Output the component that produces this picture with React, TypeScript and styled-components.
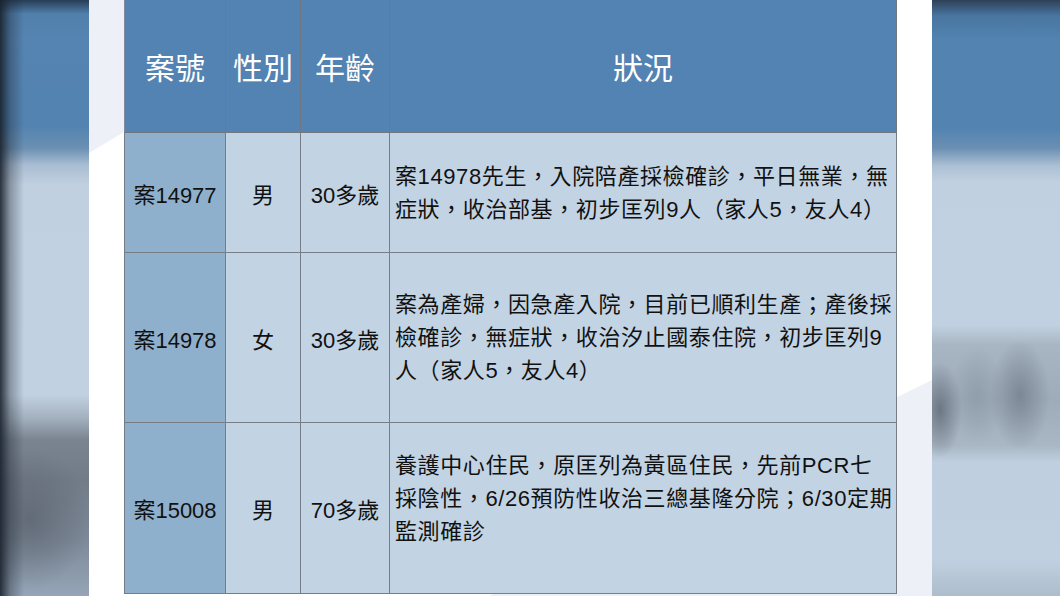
import React from "react";
import styled, { createGlobalStyle } from "styled-components";

const Global = createGlobalStyle`
  html, body { margin: 0; padding: 0; background: #ffffff; }
  body { width: 1060px; height: 596px; overflow: hidden; }
`;

const Stage = styled.div`
  display: flex;
  width: 1060px;
  height: 596px;
  overflow: hidden;
  font-family: "Liberation Sans", "Noto Sans CJK TC", sans-serif;
`;

const LeftBlur = styled.div`
  width: 89px;
  flex: none;
  background:
    linear-gradient(to right, rgba(25, 33, 44, 0.9) 0px, rgba(25, 33, 44, 0.35) 10px, rgba(25, 33, 44, 0) 24px),
    linear-gradient(to bottom, rgba(22, 34, 50, 0.7) 0px, rgba(22, 34, 50, 0) 14px),
    radial-gradient(ellipse 60px 70px at 30px 520px, rgba(80, 86, 96, 0.55), rgba(80, 86, 96, 0)),
    linear-gradient(
      to bottom,
      #4f7ea9 0px,
      #5584b2 40px,
      #5383b0 125px,
      #6a8fb2 148px,
      #a9bdd2 165px,
      #c0d0e0 185px,
      #c1d1e1 395px,
      #a3b0be 418px,
      #7a8490 440px,
      #727c88 480px,
      #7d8999 540px,
      #95a5b7 596px
    );
`;

const RightBlur = styled.div`
  width: 128px;
  flex: none;
  background:
    radial-gradient(ellipse 22px 48px at 8px 410px, rgba(100, 110, 122, 0.85), rgba(100, 110, 122, 0)),
    radial-gradient(ellipse 30px 55px at 88px 395px, rgba(115, 127, 142, 0.8), rgba(115, 127, 142, 0)),
    radial-gradient(ellipse 26px 50px at 45px 395px, rgba(135, 148, 162, 0.6), rgba(135, 148, 162, 0)),
    linear-gradient(
      to bottom,
      #2e4157 0px,
      #4876a0 16px,
      #5383b1 40px,
      #5383b1 128px,
      #6a8fb3 148px,
      #adc0d4 166px,
      #c0d0e0 182px,
      #c1d1e1 325px,
      #a8b5c3 345px,
      #9eabb9 400px,
      #a9b6c4 445px,
      #bfcfdf 462px,
      #c0d0e0 560px,
      #aebccb 596px
    );
`;

const Panel = styled.div`
  position: relative;
  flex: none;
  width: 843px;
  background: #ffffff;
  padding: 0 35px;
  box-sizing: border-box;

  &::before {
    content: "";
    position: absolute;
    inset: 0;
    background: #edf0f6;
    clip-path: polygon(0 0, 255px 0, 0 153px);
  }

  &::after {
    content: "";
    position: absolute;
    inset: 0;
    background: #edf0f6;
    clip-path: polygon(843px 380px, 843px 596px, 400px 596px);
  }
`;

const Table = styled.table`
  position: relative;
  z-index: 1;
  width: 773px;
  border-collapse: collapse;
  table-layout: fixed;
`;

const HeadCell = styled.th<{ $w?: number }>`
  ${(p) => (p.$w ? `width: ${p.$w}px;` : "")}
  height: 132px;
  padding: 0;
  background: #5283b2;
  color: #ffffff;
  font-family: "Noto Sans CJK TC", "Liberation Sans", sans-serif;
  font-size: 30px;
  font-weight: 400;
  text-align: center;
  vertical-align: middle;
  border-left: 1px solid #6f7781;
  border-right: 1px solid #6f7781;
  border-bottom: 1px solid #6f7781;
  &:first-child { border-left: 1px solid #7f8aa0; }
`;

const Row = styled.tr<{ $h: number }>`
  height: ${(p) => p.$h}px;
`;

const Cell = styled.td<{ $key?: boolean }>`
  padding: 0;
  background: ${(p) => (p.$key ? "#8fb0cd" : "#c2d3e4")};
  color: #111111;
  font-size: 22px;
  text-align: center;
  vertical-align: middle;
  border: 1px solid #767d86;
  white-space: nowrap;
`;

const DescCell = styled.td<{ $lift?: number }>`
  padding: 0 4px ${(p) => p.$lift ?? 0}px 5px;
  background: #c2d3e4;
  color: #111111;
  font-size: 22px;
  line-height: 33px;
  letter-spacing: 0.6px;
  text-align: left;
  vertical-align: middle;
  border: 1px solid #767d86;
  white-space: nowrap;
`;

type Case = {
  id: string;
  sex: string;
  age: string;
  lines: string[];
  h: number;
  lift?: number;
};

const cases: Case[] = [
  {
    id: "案14977",
    sex: "男",
    age: "30多歲",
    lines: ["案14978先生，入院陪產採檢確診，平日無業，無", "症狀，收治部基，初步匡列9人（家人5，友人4）"],
    h: 120,
    lift: 0,
  },
  {
    id: "案14978",
    sex: "女",
    age: "30多歲",
    lines: [
      "案為產婦，因急產入院，目前已順利生產；產後採",
      "檢確診，無症狀，收治汐止國泰住院，初步匡列9",
      "人（家人5，友人4）",
    ],
    h: 170,
    lift: 0,
  },
  {
    id: "案15008",
    sex: "男",
    age: "70多歲",
    lines: [
      "養護中心住民，原匡列為黃區住民，先前PCR七",
      "採陰性，6/26預防性收治三總基隆分院；6/30定期",
      "監測確診",
    ],
    h: 171,
    lift: 20,
  },
];

export default function App() {
  return (
    <>
      <Global />
      <Stage>
        <LeftBlur />
        <Panel>
          <Table>
            <thead>
              <tr>
                <HeadCell $w={100}>案號</HeadCell>
                <HeadCell $w={74}>性別</HeadCell>
                <HeadCell $w={88}>年齡</HeadCell>
                <HeadCell>狀況</HeadCell>
              </tr>
            </thead>
            <tbody>
              {cases.map((c) => (
                <Row key={c.id} $h={c.h}>
                  <Cell $key>{c.id}</Cell>
                  <Cell>{c.sex}</Cell>
                  <Cell>{c.age}</Cell>
                  <DescCell $lift={c.lift}>
                    {c.lines.map((l, i) => (
                      <React.Fragment key={i}>
                        {i > 0 && <br />}
                        {l}
                      </React.Fragment>
                    ))}
                  </DescCell>
                </Row>
              ))}
            </tbody>
          </Table>
        </Panel>
        <RightBlur />
      </Stage>
    </>
  );
}
